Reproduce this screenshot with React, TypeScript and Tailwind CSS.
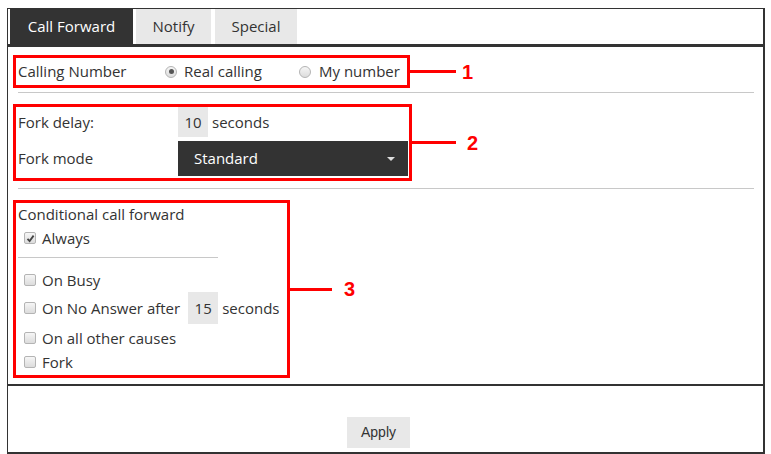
import React from "react";

const font = { fontFamily: '"Open Sans", "Noto Sans", sans-serif' };

function Radio({ checked }: { checked?: boolean }) {
  return (
    <span className="w-[12px] h-[12px] rounded-full border border-[#b4b4b4] bg-gradient-to-b from-[#f6f6f6] to-[#dcdcdc] flex items-center justify-center shrink-0">
      {checked && <span className="w-[5px] h-[5px] rounded-full bg-[#555]" />}
    </span>
  );
}

function Check({ checked }: { checked?: boolean }) {
  return (
    <span className="w-[12px] h-[12px] rounded-[2px] border border-[#b4b4b4] bg-gradient-to-b from-[#f6f6f6] to-[#dcdcdc] flex items-center justify-center shrink-0">
      {checked && (
        <svg width="9" height="9" viewBox="0 0 9 9">
          <path d="M1.5 4.8 L3.6 7 L7.6 1.6" fill="none" stroke="#444" strokeWidth="1.8" />
        </svg>
      )}
    </span>
  );
}

function Marker({ n, line, gap }: { n: string; line: string; gap: string }) {
  return (
    <>
      <div className={`${line} h-[3px] bg-[#ff0000]`} />
      <span
        className={`${gap} text-[20px] font-bold text-[#ff0000] leading-none`}
        style={{ fontFamily: '"Liberation Sans", Arial, sans-serif' }}
      >
        {n}
      </span>
    </>
  );
}

export default function App() {
  return (
    <div className="w-[771px] h-[454px] bg-white pl-[7px] pt-[8px] text-[#333] text-[15px]" style={font}>
      <div className="w-[758px] h-[446px] border border-r-2 border-b-2 border-[#333] flex flex-col">
        {/* Tabs */}
        <div className="flex pl-[2px] h-[35px] text-[15px]">
          <div className="w-[123px] bg-[#333] text-white flex items-center justify-center">Call Forward</div>
          <div className="w-[75px] ml-[3px] bg-[#e8e8e8] flex items-center justify-center">Notify</div>
          <div className="w-[82px] ml-[4px] bg-[#e8e8e8] flex items-center justify-center">Special</div>
        </div>
        <div className="h-[3px] bg-[#333]" />

        <div className="pl-[5px] pt-[8px] flex flex-col">
          {/* 1 */}
          <div className="flex items-center">
            <div className="w-[397px] h-[33px] border-[3px] border-[#ff0000] flex items-center pl-[2px]">
              <span className="w-[147px]">Calling Number</span>
              <Radio checked />
              <span className="ml-[7px] w-[115px]">Real calling</span>
              <Radio />
              <span className="ml-[8px]">My number</span>
            </div>
            <Marker n="1" line="w-[46px]" gap="ml-[6px]" />
          </div>
          <div className="mt-[4px] ml-[5px] w-[736px] h-px bg-[#c8c8c8]" />

          {/* 2 */}
          <div className="flex items-center mt-[11px]">
            <div className="w-[399px] h-[77px] border-[3px] border-[#ff0000] flex flex-col pl-[2px] gap-[4px]">
              <div className="flex items-center h-[30px]">
                <span className="w-[160px]">Fork delay:</span>
                <span className="w-[30px] h-[30px] bg-[#e8e8e8] flex items-center justify-center">10</span>
                <span className="ml-[4px]">seconds</span>
              </div>
              <div className="flex items-center h-[35px]">
                <span className="w-[160px]">Fork mode</span>
                <div className="w-[230px] h-[35px] bg-[#333] text-white text-[15px] flex items-center pl-[16px] pr-[13px] justify-between">
                  <span>Standard</span>
                  <svg width="8" height="4" viewBox="0 0 8 4">
                    <path d="M0 0 H8 L4 4 Z" fill="#ddd" />
                  </svg>
                </div>
              </div>
            </div>
            <Marker n="2" line="w-[44px]" gap="ml-[11px]" />
          </div>
          <div className="mt-[7px] ml-[5px] w-[736px] h-px bg-[#c8c8c8]" />

          {/* 3 */}
          <div className="flex items-center mt-[11px]">
            <div className="w-[277px] h-[178px] border-[3px] border-[#ff0000] flex flex-col pl-[2px]">
              <div className="h-[22px] flex items-center">Conditional call forward</div>
              <div className="h-[26px] flex items-center pl-[6px] gap-[6px]">
                <Check checked />
                <span>Always</span>
              </div>
              <div className="mt-[6px] w-[200px] h-px bg-[#c8c8c8]" />
              <div className="mt-[10px] h-[24px] flex items-center pl-[6px] gap-[6px]">
                <Check />
                <span>On Busy</span>
              </div>
              <div className="h-[32px] flex items-center pl-[6px] gap-[6px]">
                <Check />
                <span>On No Answer after</span>
                <span className="w-[30px] h-[32px] bg-[#e8e8e8] flex items-center justify-center ml-[2px]">15</span>
                <span className="-ml-[2px]">seconds</span>
              </div>
              <div className="mt-[2px] h-[24px] flex items-center pl-[6px] gap-[6px]">
                <Check />
                <span>On all other causes</span>
              </div>
              <div className="h-[24px] flex items-center pl-[6px] gap-[6px]">
                <Check />
                <span>Fork</span>
              </div>
            </div>
            <Marker n="3" line="w-[42px]" gap="ml-[12px]" />
          </div>
        </div>

        <div className="mt-[6px] h-[2px] bg-[#333]" />
        <div className="pl-[339px] pt-[31px]">
          <button
            className="w-[63px] h-[31px] bg-[#e8e8e8] text-[14px] text-[#333]"
            style={{ fontFamily: '"Liberation Sans", Arial, sans-serif' }}
          >
            Apply
          </button>
        </div>
      </div>
    </div>
  );
}
